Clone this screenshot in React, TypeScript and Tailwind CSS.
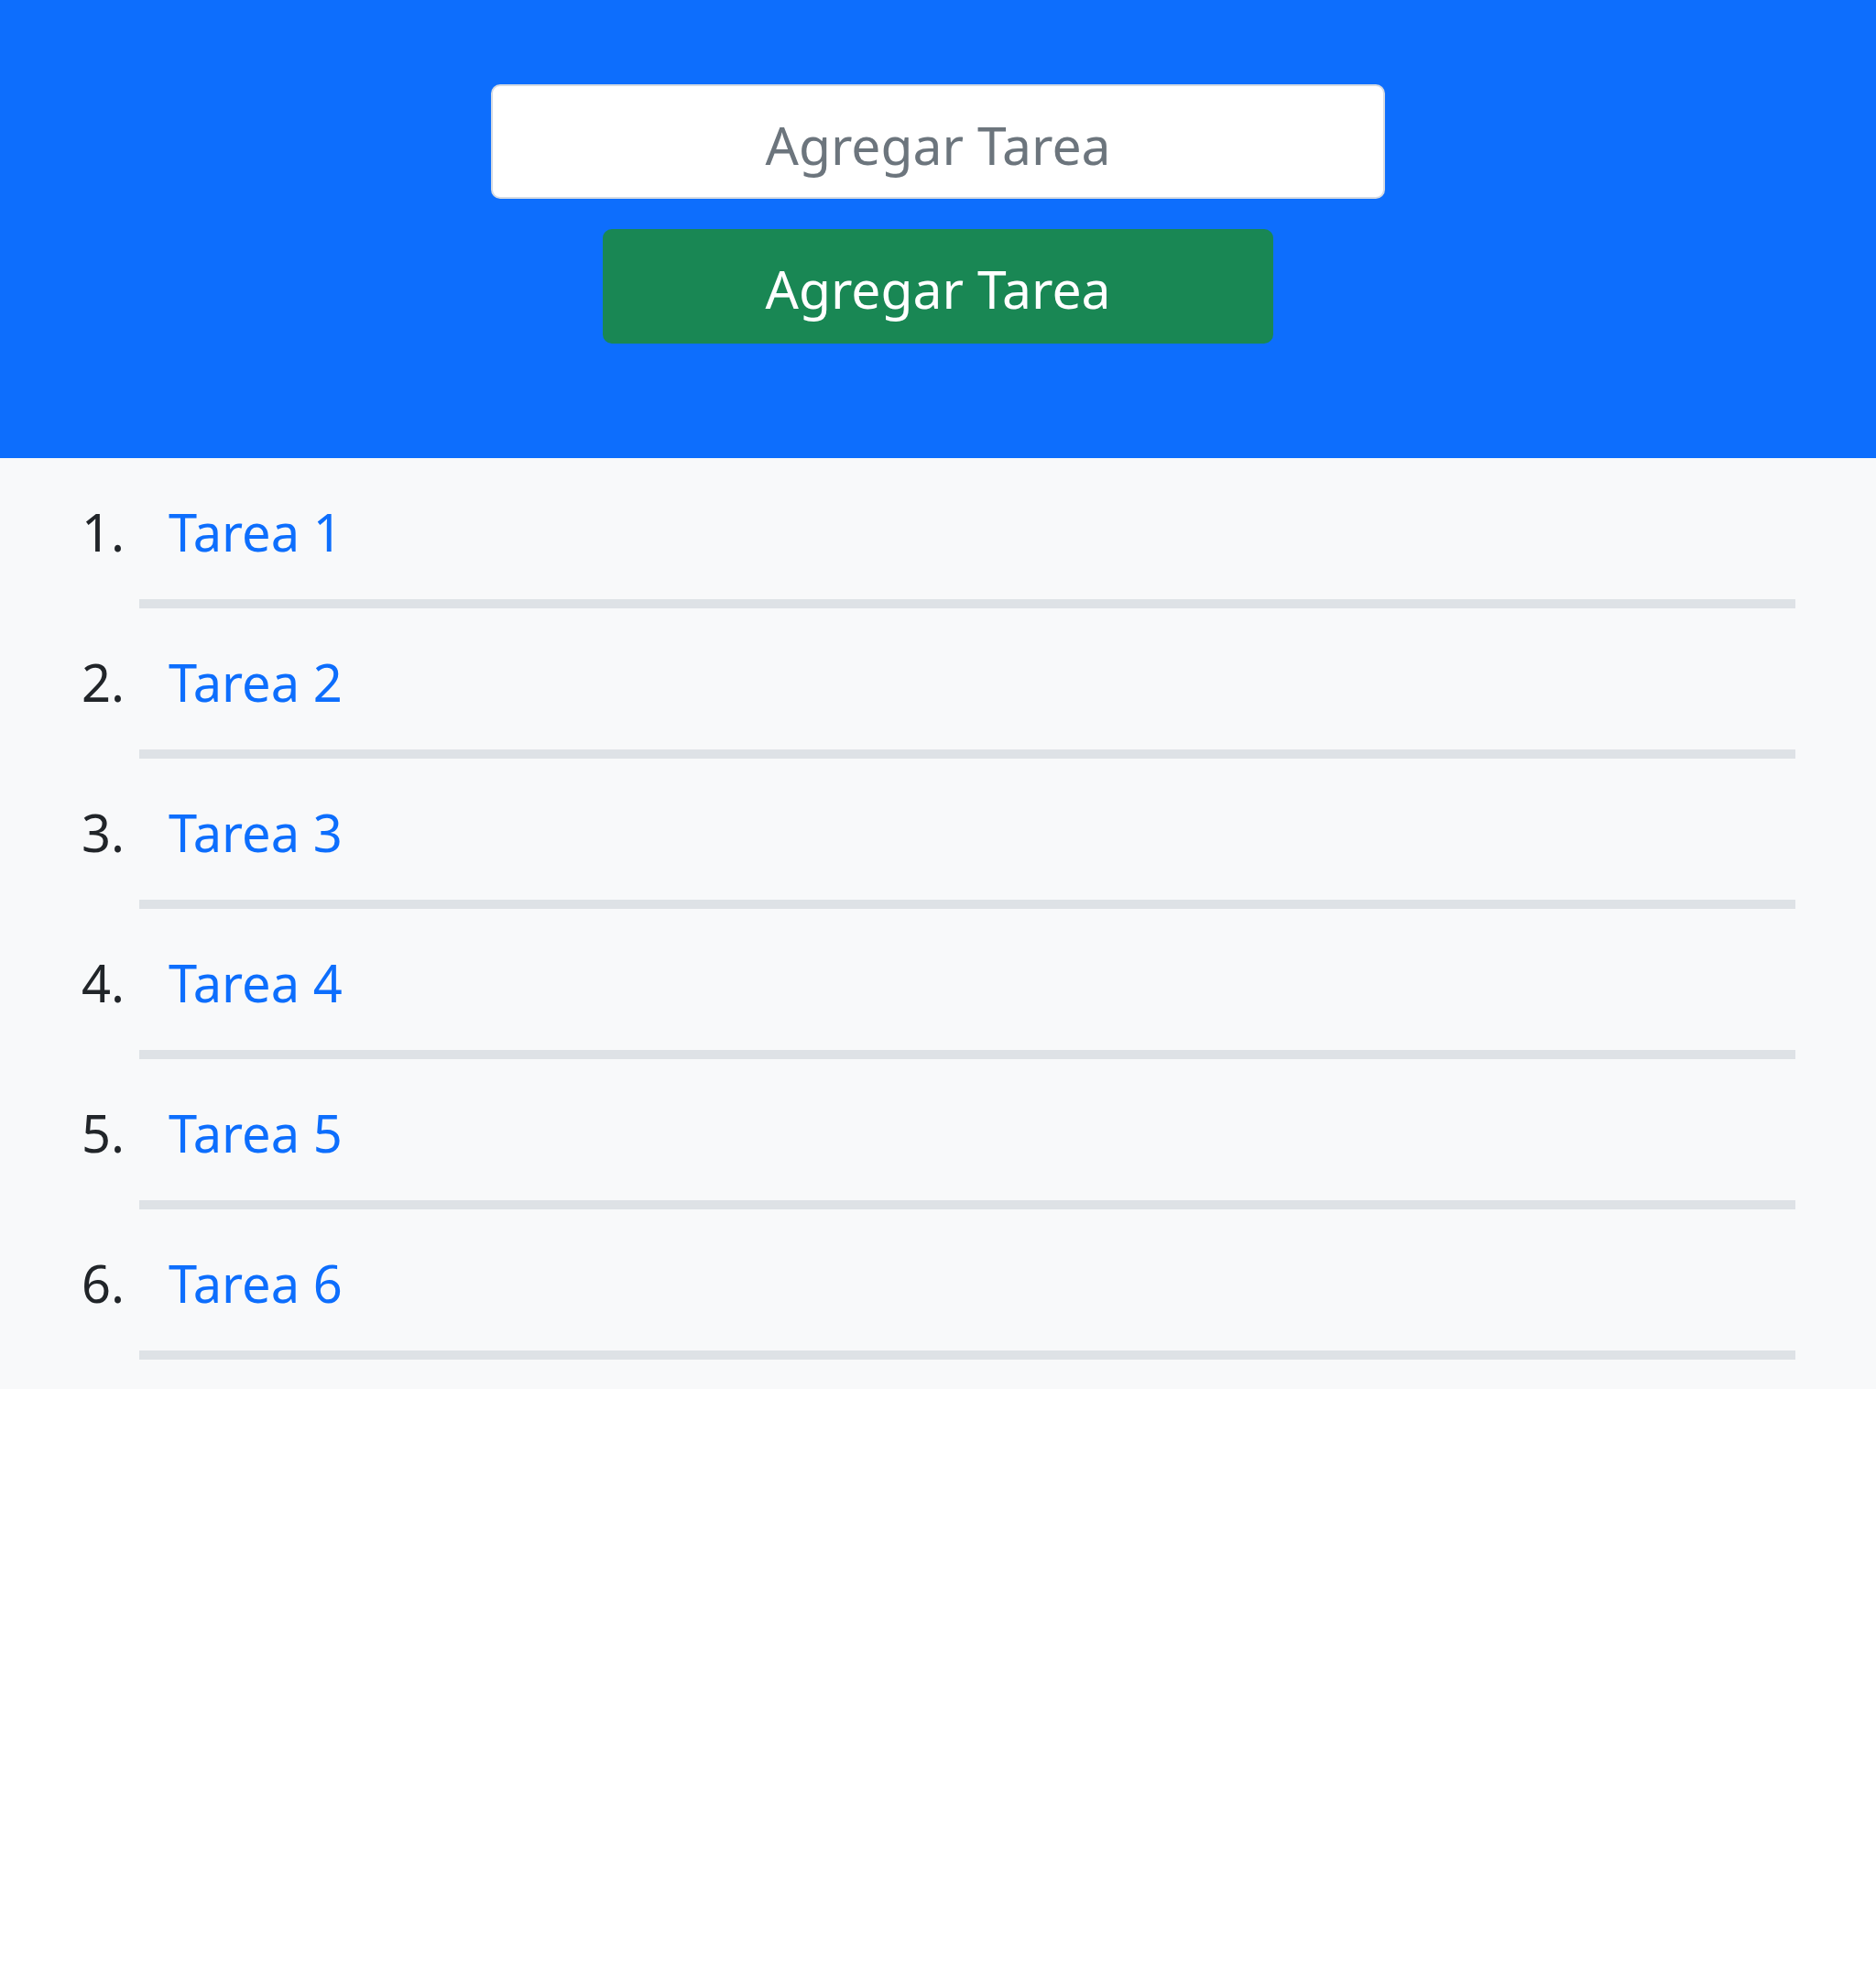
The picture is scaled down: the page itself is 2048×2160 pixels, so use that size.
import React from "react";

const tasks = ["Tarea 1", "Tarea 2", "Tarea 3", "Tarea 4", "Tarea 5", "Tarea 6"];

export default function App() {
  return (
    <div className="w-[2048px] bg-white font-['Noto_Sans',sans-serif]">
      <header className="h-[500px] bg-[#0d6efd] flex flex-col items-center pt-[92px]">
        <input
          type="text"
          placeholder="Agregar Tarea"
          className="w-[976px] h-[125px] pt-[6px] bg-white border-2 border-[#d5dbe2] rounded-[10px] text-center text-[57px] text-[#212529] placeholder:text-[#6c757d] outline-none"
        />
        <button className="mt-[33px] w-[732px] h-[125px] pt-[6px] bg-[#198754] text-white rounded-[10px] text-[57px] leading-none">
          Agregar Tarea
        </button>
      </header>
      <section className="bg-[#f8f9fa] pb-[32px]">
        <ol>
          {tasks.map((t, i) => (
            <li key={t} className="pt-[38px]">
              <div className="flex items-baseline text-[56px] leading-[84px]">
                <span className="w-[152px] pl-[89px] text-[#212529]">{i + 1}.</span>
                <span className="pl-[32px] text-[#0d6efd]">{t}</span>
              </div>
              <div className="mt-[32px] ml-[152px] w-[1808px] h-[10px] bg-[#dee2e6]" />
            </li>
          ))}
        </ol>
      </section>
    </div>
  );
}
